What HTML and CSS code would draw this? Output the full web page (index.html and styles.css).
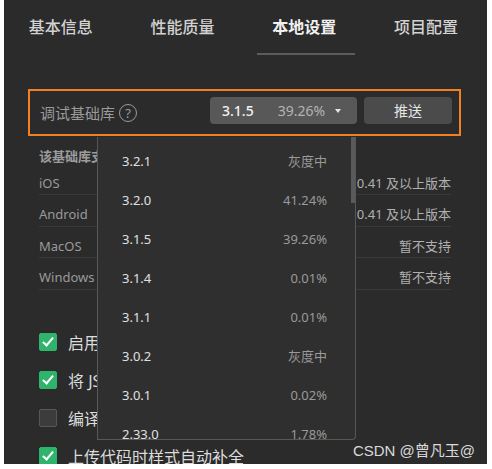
FILE: index.html
```html
<!DOCTYPE html>
<html lang="zh-CN">

<head>
    <meta charset="UTF-8">
    <title>本地设置</title>
    <link rel="stylesheet" href="styles.css">
</head>

<body>
<div class="screen">
    <!-- Tabs -->
    <div class="tabs">
        <div class="tab">基本信息</div>
        <div class="tab">性能质量</div>
        <div class="tab active">本地设置</div>
        <div class="tab">项目配置</div>
    </div>

    <!-- Debug base library -->
    <div class="lib-box">
        <div class="lib-label">调试基础库 <span class="help">?</span></div>
        <div class="lib-select">
            <span class="ver">3.1.5</span>
            <span class="pct">39.26%</span>
            <span class="caret"></span>
        </div>
        <div class="push-btn">推送</div>
    </div>

    <!-- Client support table (partly hidden by the menu) -->
    <div class="support">
        <div class="support-head">该基础库支持的最低客户端版本</div>
        <div class="support-row short"><span>iOS</span><span>8.0.41 及以上版本</span></div>
        <div class="support-row"><span>Android</span><span>8.0.41 及以上版本</span></div>
        <div class="support-row short"><span>MacOS</span><span>暂不支持</span></div>
        <div class="support-row"><span>Windows</span><span>暂不支持</span></div>
    </div>

    <!-- Options -->
    <div class="options">
        <div class="option"><span class="check on"></span>启用多核心编译</div>
        <div class="option"><span class="check on"></span>将 JS 编译成 ES5</div>
        <div class="option"><span class="check"></span>编译时压缩代码</div>
        <div class="option"><span class="check on"></span>上传代码时样式自动补全</div>
    </div>

    <!-- Version dropdown -->
    <div class="lib-menu">
        <div class="menu-item"><span class="ver">3.2.1</span><span class="pct">灰度中</span></div>
        <div class="menu-item"><span class="ver">3.2.0</span><span class="pct">41.24%</span></div>
        <div class="menu-item"><span class="ver">3.1.5</span><span class="pct">39.26%</span></div>
        <div class="menu-item"><span class="ver">3.1.4</span><span class="pct">0.01%</span></div>
        <div class="menu-item"><span class="ver">3.1.1</span><span class="pct">0.01%</span></div>
        <div class="menu-item"><span class="ver">3.0.2</span><span class="pct">灰度中</span></div>
        <div class="menu-item"><span class="ver">3.0.1</span><span class="pct">0.02%</span></div>
        <div class="menu-item"><span class="ver">2.33.0</span><span class="pct">1.78%</span></div>
        <div class="scroll-thumb"></div>
    </div>

    <div class="watermark">CSDN @曾凡玉@</div>
</div>
</body>

</html>
```

FILE: styles.css
```css
body {
    margin: 0;
    background-color: #fff;
    font-family: "Noto Sans", "Noto Sans CJK SC", sans-serif;
}

.screen {
    position: relative;
    width: 483px;
    height: 464px;
    margin-left: 4px;
    background-color: #2b2b2b;
    overflow: hidden;
}

/* tabs */
.tabs {
    display: flex;
    margin-left: -4px;
    height: 56px;
}

.tab {
    position: relative;
    width: 123px;
    padding-top: 17px;
    line-height: 20px;
    font-size: 16px;
    text-align: center;
    color: #d2d2d2;
    font-weight: 500;
    box-sizing: border-box;
}

.tab.active {
    color: #f0f0f0;
    font-weight: 600;
}

.tab.active::after {
    content: '';
    position: absolute;
    left: 13px;
    top: 53px;
    width: 98px;
    height: 2px;
    background-color: #5c5c5c;
}

/* library box */
.lib-box {
    display: flex;
    align-items: flex-start;
    margin: 33px 0 0 24px;
    width: 433px;
    height: 47px;
    padding: 6px 7px 0 10px;
    border: 2px solid #f27f22;
    box-sizing: border-box;
}

.lib-label {
    display: flex;
    align-items: center;
    padding-top: 2px;
    line-height: 28px;
    font-size: 15px;
    color: #9a9a9a;
    flex: 1;
}

.help {
    display: inline-flex;
    align-items: center;
    justify-content: center;
    width: 18px;
    height: 18px;
    margin-left: 4px;
    border: 1.3px solid #9a9a9a;
    border-radius: 50%;
    box-sizing: border-box;
    font-size: 13px;
    line-height: 1;
}

.lib-select {
    display: flex;
    align-items: center;
    width: 147px;
    height: 27px;
    padding: 0 12px 0 12px;
    box-sizing: border-box;
    background-color: #585858;
    border-radius: 4px;
    font-size: 14px;
}

.lib-select .ver {
    color: #f2f2f2;
    font-weight: 500;
}

.lib-select .pct {
    margin-left: 24px;
    color: #b4b4b4;
}

.caret {
    margin-left: 10px;
    width: 0;
    height: 0;
    border-left: 3.5px solid transparent;
    border-right: 3.5px solid transparent;
    border-top: 4px solid #e6e6e6;
}

.push-btn {
    width: 88px;
    height: 27px;
    margin-left: 7px;
    line-height: 27px;
    text-align: center;
    background-color: #4b4b4b;
    border-radius: 4px;
    font-size: 14px;
    color: #e6e6e6;
}

/* support table */
.support {
    margin: 12px 36px 0 35px;
}

.support-head {
    line-height: 16px;
    font-size: 13px;
    font-weight: 600;
    color: #9c9c9c;
}

.support-row {
    display: flex;
    justify-content: space-between;
    height: 32px;
    padding-top: 10px;
    line-height: 18px;
    font-size: 13px;
    color: #9a9a9a;
    border-bottom: 1px solid #3a3a3a;
    box-sizing: border-box;
}

.support-row.short {
    height: 31px;
}

.support-row span:last-child {
    color: #b0b0b0;
}

/* options */
.options {
    margin: 33px 0 0 35px;
}

.option {
    display: flex;
    align-items: center;
    height: 38px;
    font-size: 16px;
    color: #dcdcdc;
}

.check {
    position: relative;
    width: 18px;
    height: 18px;
    margin-right: 11px;
    border-radius: 2px;
    background-color: #3c3c3c;
    border: 1px solid #575757;
    box-sizing: border-box;
}

.check.on {
    background-color: #2fb46b;
    border-color: #2fb46b;
}

.check.on::after {
    content: '';
    position: absolute;
    left: 5px;
    top: 1px;
    width: 4px;
    height: 9px;
    border-right: 2px solid #fff;
    border-bottom: 2px solid #fff;
    transform: rotate(40deg);
}

/* dropdown menu */
.lib-menu {
    position: absolute;
    left: 93px;
    top: 137px;
    width: 259px;
    height: 303px;
    padding: 5px 28px 0 24px;
    box-sizing: border-box;
    background-color: #2f2f2f;
    border: 1px solid #585858;
    border-top: none;
    border-radius: 0 0 4px 0;
    overflow: hidden;
}

.menu-item {
    display: flex;
    justify-content: space-between;
    height: 39px;
    line-height: 39px;
    font-size: 13px;
}

.menu-item .ver {
    color: #e0e0e0;
}

.menu-item .pct {
    color: #9a9a9a;
}

.scroll-thumb {
    position: absolute;
    right: 0;
    top: 0;
    width: 4px;
    height: 66px;
    background-color: #5a5a5a;
}

.watermark {
    position: absolute;
    right: 12px;
    top: 439px;
    font-family: "Liberation Sans", "Noto Sans CJK SC", sans-serif;
    font-size: 15px;
    color: #dadada;
}
```
